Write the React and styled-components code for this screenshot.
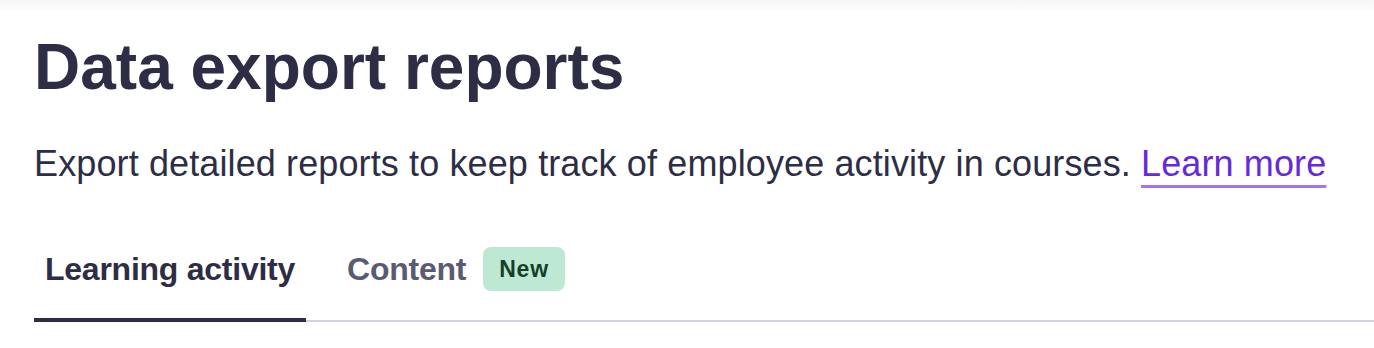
import React, { useState } from "react";
import styled, { createGlobalStyle } from "styled-components";

const GlobalStyle = createGlobalStyle`
  body {
    margin: 0;
    background: #ffffff;
    font-family: "Liberation Sans", Arial, sans-serif;
    color: #2d2e45;
  }
`;

const tabs = [
  { id: "learning", label: "Learning activity" },
  { id: "content", label: "Content", badge: "New" },
];

const App = () => {
  const [active, setActive] = useState("learning");

  return (
    <>
      <GlobalStyle />
      <TopShade />
      <Page>
        <Title>Data export reports</Title>
        <Description>
          Export detailed reports to keep track of employee activity in courses.{" "}
          <LearnMore href="#">Learn more</LearnMore>
        </Description>
        <TabList role="tablist">
          {tabs.map((tab) => (
            <Tab
              key={tab.id}
              role="tab"
              $active={active === tab.id}
              onClick={() => setActive(tab.id)}
            >
              {tab.label}
              {tab.badge && <Badge>{tab.badge}</Badge>}
            </Tab>
          ))}
        </TabList>
      </Page>
    </>
  );
};

const TopShade = styled.div`
  height: 10px;
  background: linear-gradient(#f6f6f9, #fcfcfd);
`;

const Page = styled.div`
  padding: 19px 0 0 34px;
`;

const Title = styled.h1`
  margin: 0;
  font-size: 64px;
  line-height: 76px;
  font-weight: 700;
  color: #2d2e45;
`;

const Description = styled.p`
  margin: 33px 0 0;
  font-size: 36px;
  line-height: 52px;
  letter-spacing: 0.12px;
  color: #2d2e45;
`;

const LearnMore = styled.a`
  color: #6529d9;
  text-decoration: underline;
  text-decoration-color: #a674f0;
  text-decoration-thickness: 3px;
  text-underline-offset: 9px;
`;

const TabList = styled.div`
  display: flex;
  gap: 30px;
  margin-top: 59px;
  border-bottom: 2px solid #d1d2e0;
`;

const Tab = styled.button`
  display: flex;
  align-items: center;
  gap: 17px;
  height: 73px;
  margin: 0 0 -2px;
  padding: 0 11px 29px;
  background: none;
  border: none;
  border-bottom: 4px solid ${(p) => (p.$active ? "#2d2e45" : "transparent")};
  font-family: inherit;
  font-size: 32px;
  line-height: 40px;
  letter-spacing: -0.25px;
  font-weight: 700;
  color: ${(p) => (p.$active ? "#2d2e45" : "#595b72")};
  cursor: pointer;
`;

const Badge = styled.span`
  display: inline-flex;
  align-items: center;
  height: 44px;
  margin: -2px 0;
  padding: 0 16px;
  border-radius: 8px;
  background: #bde9d4;
  color: #163f29;
  font-size: 23px;
  letter-spacing: 0.8px;
  font-weight: 700;
`;

export default App;
